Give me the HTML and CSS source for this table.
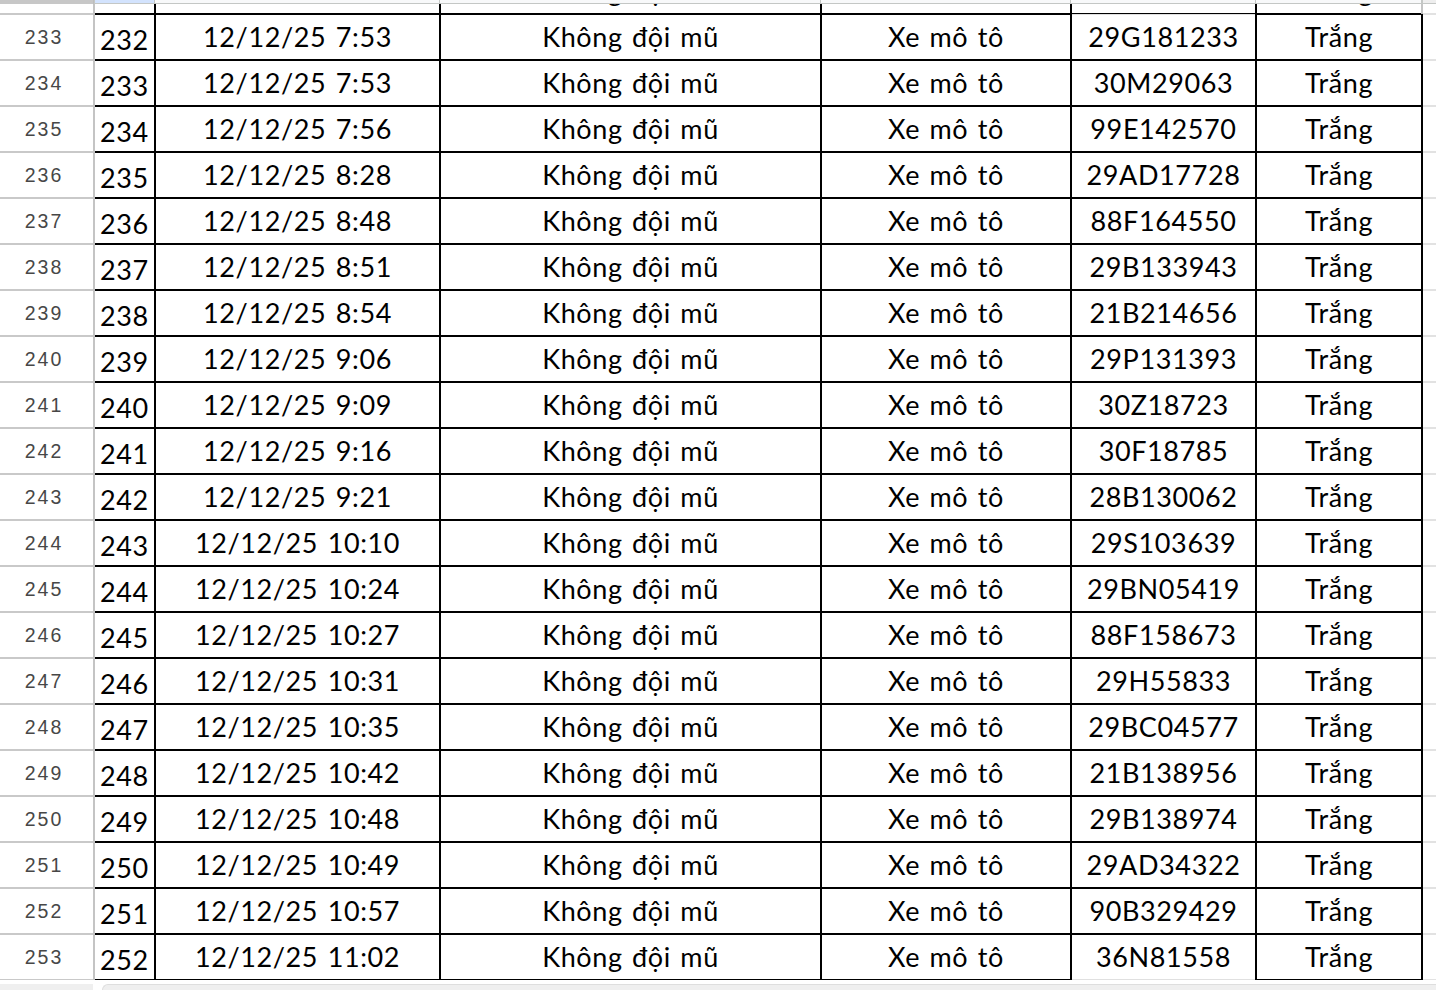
FILE: index.html
```html
<!DOCTYPE html>
<html lang="vi">
<head>
<meta charset="utf-8">
<title>Sheet</title>
<link rel="stylesheet" href="styles.css">
</head>
<body>
<div class="sheet">
  <div class="row head">
    <div class="hc corner"></div>
    <div class="hc sel"></div>
    <div class="hc"></div>
    <div class="hc"></div>
    <div class="hc"></div>
    <div class="hc"></div>
    <div class="hc"></div>
    <div class="hc last"></div>
  </div>
  <div class="clip">
    <div class="row prev">
      <div class="rh">232</div>
      <div class="c a">231</div>
      <div class="c m">12/12/25 7:51</div>
      <div class="c m">Không đội mũ</div>
      <div class="c m">Xe mô tô</div>
      <div class="c m">29B100000</div>
      <div class="c m fr">Trắng</div>
      <div class="g gl"></div>
    </div>
  </div>
  <div class="row"><div class="rh">233</div><div class="c a">232</div><div class="c m">12/12/25 7:53</div><div class="c m">Không đội mũ</div><div class="c m">Xe mô tô</div><div class="c m et">29G181233</div><div class="c m">Trắng</div><div class="g"></div></div>
  <div class="row"><div class="rh">234</div><div class="c a">233</div><div class="c m">12/12/25 7:53</div><div class="c m">Không đội mũ</div><div class="c m">Xe mô tô</div><div class="c m">30M29063</div><div class="c m">Trắng</div><div class="g"></div></div>
  <div class="row"><div class="rh">235</div><div class="c a">234</div><div class="c m">12/12/25 7:56</div><div class="c m">Không đội mũ</div><div class="c m">Xe mô tô</div><div class="c m">99E142570</div><div class="c m">Trắng</div><div class="g"></div></div>
  <div class="row"><div class="rh">236</div><div class="c a">235</div><div class="c m">12/12/25 8:28</div><div class="c m">Không đội mũ</div><div class="c m">Xe mô tô</div><div class="c m">29AD17728</div><div class="c m">Trắng</div><div class="g"></div></div>
  <div class="row"><div class="rh">237</div><div class="c a">236</div><div class="c m">12/12/25 8:48</div><div class="c m">Không đội mũ</div><div class="c m">Xe mô tô</div><div class="c m">88F164550</div><div class="c m">Trắng</div><div class="g"></div></div>
  <div class="row"><div class="rh">238</div><div class="c a">237</div><div class="c m">12/12/25 8:51</div><div class="c m">Không đội mũ</div><div class="c m">Xe mô tô</div><div class="c m">29B133943</div><div class="c m">Trắng</div><div class="g"></div></div>
  <div class="row"><div class="rh">239</div><div class="c a">238</div><div class="c m">12/12/25 8:54</div><div class="c m">Không đội mũ</div><div class="c m">Xe mô tô</div><div class="c m">21B214656</div><div class="c m">Trắng</div><div class="g"></div></div>
  <div class="row"><div class="rh">240</div><div class="c a">239</div><div class="c m">12/12/25 9:06</div><div class="c m">Không đội mũ</div><div class="c m">Xe mô tô</div><div class="c m">29P131393</div><div class="c m">Trắng</div><div class="g"></div></div>
  <div class="row"><div class="rh">241</div><div class="c a">240</div><div class="c m">12/12/25 9:09</div><div class="c m">Không đội mũ</div><div class="c m">Xe mô tô</div><div class="c m">30Z18723</div><div class="c m">Trắng</div><div class="g"></div></div>
  <div class="row"><div class="rh">242</div><div class="c a">241</div><div class="c m">12/12/25 9:16</div><div class="c m">Không đội mũ</div><div class="c m">Xe mô tô</div><div class="c m">30F18785</div><div class="c m">Trắng</div><div class="g"></div></div>
  <div class="row"><div class="rh">243</div><div class="c a">242</div><div class="c m">12/12/25 9:21</div><div class="c m">Không đội mũ</div><div class="c m">Xe mô tô</div><div class="c m">28B130062</div><div class="c m">Trắng</div><div class="g"></div></div>
  <div class="row"><div class="rh">244</div><div class="c a">243</div><div class="c m">12/12/25 10:10</div><div class="c m">Không đội mũ</div><div class="c m">Xe mô tô</div><div class="c m">29S103639</div><div class="c m">Trắng</div><div class="g"></div></div>
  <div class="row"><div class="rh">245</div><div class="c a">244</div><div class="c m">12/12/25 10:24</div><div class="c m">Không đội mũ</div><div class="c m">Xe mô tô</div><div class="c m">29BN05419</div><div class="c m">Trắng</div><div class="g"></div></div>
  <div class="row"><div class="rh">246</div><div class="c a">245</div><div class="c m">12/12/25 10:27</div><div class="c m">Không đội mũ</div><div class="c m">Xe mô tô</div><div class="c m">88F158673</div><div class="c m">Trắng</div><div class="g"></div></div>
  <div class="row"><div class="rh">247</div><div class="c a">246</div><div class="c m">12/12/25 10:31</div><div class="c m">Không đội mũ</div><div class="c m">Xe mô tô</div><div class="c m">29H55833</div><div class="c m">Trắng</div><div class="g"></div></div>
  <div class="row"><div class="rh">248</div><div class="c a">247</div><div class="c m">12/12/25 10:35</div><div class="c m">Không đội mũ</div><div class="c m">Xe mô tô</div><div class="c m">29BC04577</div><div class="c m">Trắng</div><div class="g"></div></div>
  <div class="row"><div class="rh">249</div><div class="c a">248</div><div class="c m">12/12/25 10:42</div><div class="c m">Không đội mũ</div><div class="c m">Xe mô tô</div><div class="c m">21B138956</div><div class="c m">Trắng</div><div class="g"></div></div>
  <div class="row"><div class="rh">250</div><div class="c a">249</div><div class="c m">12/12/25 10:48</div><div class="c m">Không đội mũ</div><div class="c m">Xe mô tô</div><div class="c m">29B138974</div><div class="c m">Trắng</div><div class="g"></div></div>
  <div class="row"><div class="rh">251</div><div class="c a">250</div><div class="c m">12/12/25 10:49</div><div class="c m">Không đội mũ</div><div class="c m">Xe mô tô</div><div class="c m">29AD34322</div><div class="c m">Trắng</div><div class="g"></div></div>
  <div class="row"><div class="rh">252</div><div class="c a">251</div><div class="c m">12/12/25 10:57</div><div class="c m">Không đội mũ</div><div class="c m">Xe mô tô</div><div class="c m">90B329429</div><div class="c m">Trắng</div><div class="g"></div></div>
  <div class="row"><div class="rh">253</div><div class="c a">252</div><div class="c m">12/12/25 11:02</div><div class="c m">Không đội mũ</div><div class="c m">Xe mô tô</div><div class="c m eb">36N81558</div><div class="c m">Trắng</div><div class="g"></div></div>
  <div class="foot">
    <div class="foot-left"></div>
    <div class="foot-bar"></div>
  </div>
</div>
</body>
</html>
```
FILE: styles.css
```css
html, body {
  margin: 0;
  padding: 0;
  background: #ffffff;
}
body {
  width: 1436px;
  height: 990px;
  overflow: hidden;
}
.sheet {
  display: flex;
  flex-direction: column;
}
.row {
  display: grid;
  grid-template-columns: 94px 61px 285px 381px 250px 185px 166px 14px;
  height: 46px;
}
.row.head {
  height: 4px;
}
.hc {
  background: #f8f9fa;
  box-shadow: inset 0 -1px #c4c7c5, inset -1px 0 #c4c7c5;
}
.hc.corner {
  background: #c7c7c7;
  box-shadow: inset -1px 0 #bdbdbd;
}
.hc.sel {
  background: #d3e3fd;
  box-shadow: inset 0 -1px #c4c7c5, inset -1px 0 #c4c7c5, inset 1px 0 #c4c7c5;
}
.hc.last {
  background: #eeeeee;
  box-shadow: inset 0 -1px #c4c7c5, inset 1px 0 #c4c7c5;
}
.clip {
  height: 10px;
  overflow: hidden;
}
.row.prev {
  margin-top: -36px;
}
.rh {
  display: flex;
  align-items: center;
  justify-content: center;
  padding-right: 6px;
  font-family: "Liberation Sans", Arial, sans-serif;
  font-size: 19.5px;
  letter-spacing: 2px;
  color: #474747;
  box-shadow: inset -1px 0 #c4c4c4, inset 0 1px #c9c9c9, inset 0 -1px #c9c9c9;
}
.c {
  display: flex;
  font-family: Lato, "Noto Sans", sans-serif;
  font-size: 27px;
  letter-spacing: 0.6px;
  word-spacing: 2px;
  color: #000000;
  white-space: nowrap;
  box-shadow: inset 1px 0 #000, inset -1px 0 #000, inset 0 1px #000, inset 0 -1px #000;
}
.c.a {
  align-items: flex-end;
  padding-left: 6px;
  padding-bottom: 4px;
  box-shadow: inset 1px 0 #c4c4c4, inset -1px 0 #000, inset 0 1px #000, inset 0 -1px #000;
}
.c.m {
  align-items: center;
  justify-content: center;
  padding-bottom: 2px;
}
.c.et {
  box-shadow: inset 1px 0 #000, inset -1px 0 #000, inset 0 1px #e0e0e0, inset 0 -1px #000;
}
.c.eb {
  box-shadow: inset 1px 0 #000, inset -1px 0 #000, inset 0 1px #000, inset 0 -1px #e0e0e0;
}
.c.fr {
  box-shadow: inset 1px 0 #000, inset -1px 0 #c4c4c4, inset 0 1px #000, inset 0 -1px #000;
}
.g {
  box-shadow: inset 1px 0 #000, inset 0 1px #e2e2e2, inset 0 -1px #e2e2e2;
}
.g.gl {
  box-shadow: inset 1px 0 #c4c4c4, inset 0 1px #e2e2e2, inset 0 -1px #e2e2e2;
}
.foot {
  display: flex;
  height: 10px;
  padding-top: 4px;
  box-sizing: border-box;
  gap: 9px;
}
.foot-left {
  width: 93px;
  background: #efefef;
}
.foot-bar {
  flex: 1;
  background: #efefef;
  border-top: 1px solid #dedede;
  border-left: 1px solid #dedede;
  border-top-left-radius: 6px;
}
```
